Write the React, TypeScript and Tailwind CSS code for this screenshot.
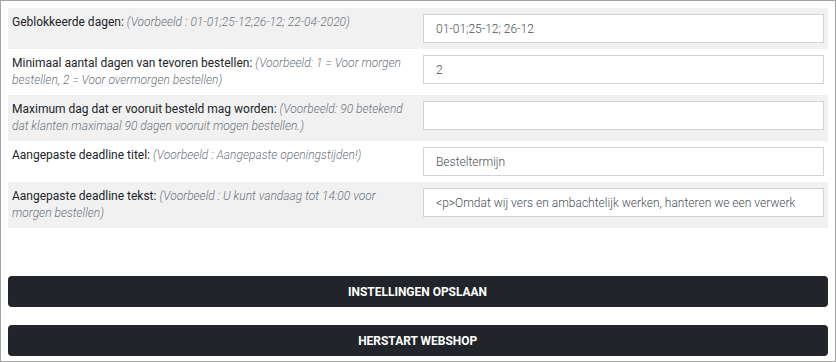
import React from "react";

const rows: { label: string; example: string; value: string; shaded: boolean }[] = [
  { label: "Geblokkeerde dagen:", example: "(Voorbeeld : 01-01;25-12;26-12; 22-04-2020)", value: "01-01;25-12; 26-12", shaded: true },
  { label: "Minimaal aantal dagen van tevoren bestellen:", example: "(Voorbeeld: 1 = Voor morgen bestellen, 2 = Voor overmorgen bestellen)", value: "2", shaded: false },
  { label: "Maximum dag dat er vooruit besteld mag worden:", example: "(Voorbeeld: 90 betekend dat klanten maximaal 90 dagen vooruit mogen bestellen.)", value: "", shaded: true },
  { label: "Aangepaste deadline titel:", example: "(Voorbeeld : Aangepaste openingstijden!)", value: "Besteltermijn", shaded: false },
  { label: "Aangepaste deadline tekst:", example: "(Voorbeeld : U kunt vandaag tot 14:00 voor morgen bestellen)", value: "<p>Omdat wij vers en ambachtelijk werken, hanteren we een verwerkingstermijn</p>", shaded: true },
];

export default function App() {
  return (
    <div
      className="w-[836px] h-[362px] border border-[#a3a3a3] bg-white px-[7px] pt-[7px] flex flex-col"
      style={{ fontFamily: "Roboto, 'Liberation Sans', sans-serif" }}
    >
      <div className="flex flex-col">
        {rows.map((r, i) => (
          <div key={i} className={`flex ${r.shaded ? "bg-[#f1f1f1]" : "bg-white"}`}>
            <div className="w-1/2 pl-[4px] pr-[4px] pt-[6px] pb-[6px] text-[12px] leading-[17px] text-[#212529]">
              {r.label} <i className="font-light text-[#6c757d]">{r.example}</i>
            </div>
            <div className="w-1/2 pl-[5px] pr-[4px] pt-[6px] pb-[6px]">
              <input
                readOnly
                value={r.value}
                className="block w-full h-[29px] border border-[#ced4da] bg-white pl-[12px] pr-[27px] text-[12px] font-light text-[#495057] outline-none"
                style={{ fontFamily: "Roboto, 'Liberation Sans', sans-serif" }}
              />
            </div>
          </div>
        ))}
      </div>
      <div className="mt-[48px] h-[31px] rounded-[4px] bg-[#212529] flex items-center justify-center">
        <span className="inline-block scale-x-[0.92] text-white font-bold text-[13px] uppercase">Instellingen opslaan</span>
      </div>
      <div className="mt-[18px] h-[31px] rounded-[4px] bg-[#212529] flex items-center justify-center">
        <span className="inline-block scale-x-[0.92] text-white font-bold text-[13px] uppercase">Herstart webshop</span>
      </div>
    </div>
  );
}
